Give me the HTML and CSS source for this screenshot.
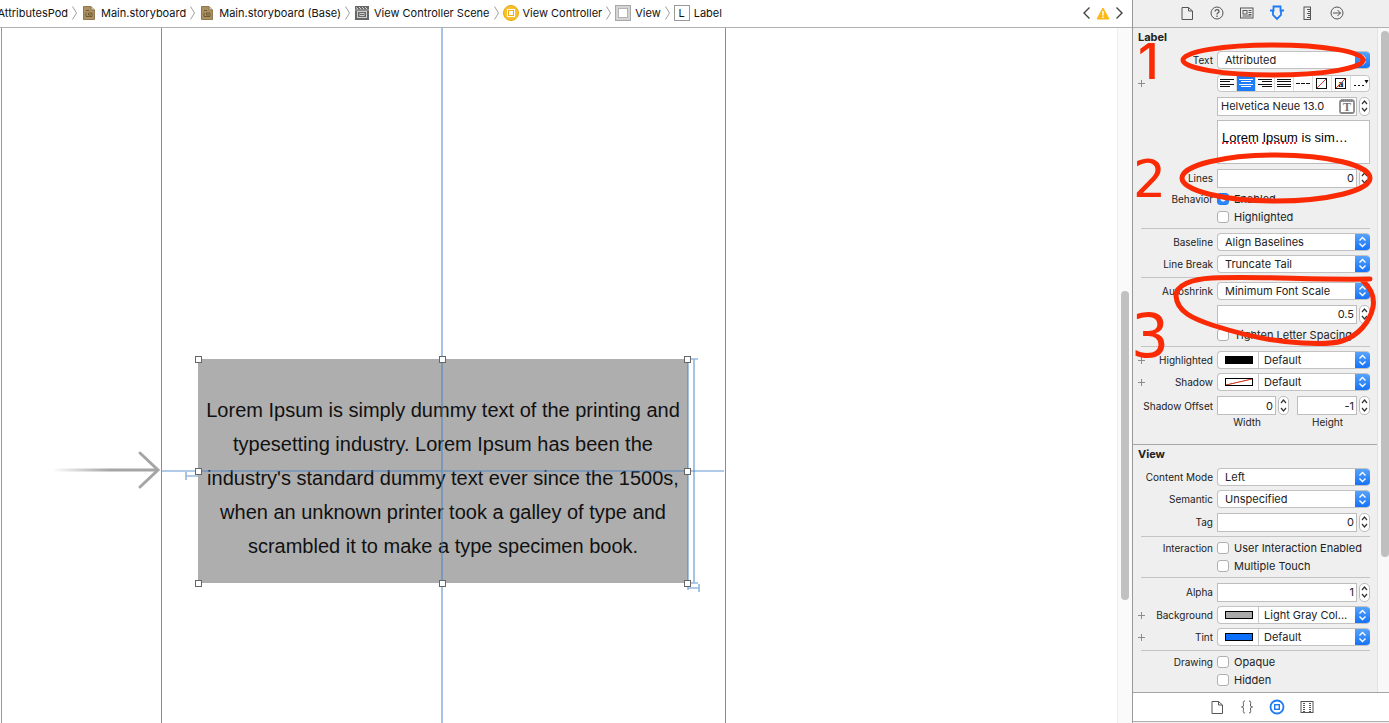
FILE: index.html
```html
<!DOCTYPE html>
<html lang="en">
<head>
  <meta charset="UTF-8">
  <title>Main.storyboard</title>
  <link rel="stylesheet" href="styles.css">
</head>
<body>
  <!-- shared icons -->
  <svg class="sprite" aria-hidden="true">
    <linearGradient id="arrow-fade" gradientUnits="userSpaceOnUse" x1="52" y1="0" x2="110" y2="0">
      <stop offset="0" stop-color="#a5a5a5" stop-opacity="0"/>
      <stop offset="1" stop-color="#a5a5a5"/>
    </linearGradient>
    <symbol id="sep" viewBox="0 0 5 16"><path d="M.5 1.500L4.500 8L.5 14.500" fill="none" stroke="#a0a0a0"/></symbol>
    <symbol id="storyboard" viewBox="0 0 12 14">
      <path d="M.5 .5H8L11.500 4V13.500H.5Z" fill="#ab9061" stroke="#8d7850"/>
      <path d="M8 .5V4H11.500" fill="#d9cdb5" stroke="#8d7850"/>
      <path d="M3 4.500H6M3 6.500V10.500H9V7H5.500V9H8" fill="none" stroke="#6f5a35"/>
    </symbol>
    <symbol id="updown" viewBox="0 0 15 18"><path d="M4.500 7.500L7.500 4.500L10.500 7.500M4.500 10.500L7.500 13.500L10.500 10.500" fill="none" stroke="#fff" stroke-width="1.400"/></symbol>
    <symbol id="up" viewBox="0 0 9 8"><path d="M2 6L4.500 3L7 6" fill="none" stroke="#333" stroke-width="1.200"/></symbol>
    <symbol id="down" viewBox="0 0 9 8"><path d="M2 2L4.500 5L7 2" fill="none" stroke="#333" stroke-width="1.200"/></symbol>
    <symbol id="plus" viewBox="0 0 7 7"><path d="M3.500 0V7M0 3.500H7" stroke="#8c8c8c"/></symbol>
    <symbol id="file" viewBox="0 0 16 16"><path d="M3 2.500H9.500L13.500 6V14.500H3ZM9.500 2.500V6H13.500" fill="none" stroke="#555"/></symbol>
  </svg>

  <div class="window">
    <main class="editor">
      <nav class="jumpbar" aria-label="Jump bar">
        <button class="crumb crumb-root">AttributesPod</button>
        <svg class="sep"><use href="#sep"/></svg>
        <button class="crumb"><svg width="16" height="14"><use href="#storyboard"/></svg>Main.storyboard</button>
        <svg class="sep"><use href="#sep"/></svg>
        <button class="crumb"><svg width="16" height="14"><use href="#storyboard"/></svg>Main.storyboard (Base)</button>
        <svg class="sep"><use href="#sep"/></svg>
        <button class="crumb">
          <svg width="16" height="14" viewBox="-1 0 16 14">
            <rect width="14" height="14" fill="#666"/>
            <path d="M1 1.500L3 3M4 1L6 3M7 1L9 3M10 1L12 3" stroke="#d8d8d8"/>
            <path d="M0 4H14" stroke="#ccc" stroke-width=".7"/>
            <rect x="2.500" y="5.500" width="9" height="6" fill="none" stroke="#d0d0d0"/>
            <rect x="5" y="7.500" width="4" height="2" fill="none" stroke="#d0d0d0"/>
          </svg>View Controller Scene
        </button>
        <svg class="sep"><use href="#sep"/></svg>
        <button class="crumb">
          <svg width="16" height="16" viewBox="0 0 16 16">
            <circle cx="8" cy="8" r="7.500" fill="#fbc02b" stroke="#e8a80e"/>
            <rect x="4.500" y="4.500" width="7" height="7" fill="#f0ae14" stroke="#fff"/>
            <rect x="6" y="6" width="4" height="4" fill="#fff"/>
          </svg>View Controller
        </button>
        <svg class="sep"><use href="#sep"/></svg>
        <button class="crumb">
          <svg width="16" height="16" viewBox="0 0 16 16">
            <rect x=".5" y=".5" width="15" height="15" fill="#d4d4d4" stroke="#a8a8a8"/>
            <rect x="3.500" y="3.500" width="9" height="9" fill="#fff" stroke="#b4b4b4"/>
          </svg>View
        </button>
        <svg class="sep"><use href="#sep"/></svg>
        <button class="crumb"><span class="label-icon">L</span>Label</button>

        <div class="issues">
          <button aria-label="Previous issue"><svg width="9" height="14" viewBox="0 0 9 14"><path d="M7.500 1.500L2 7L7.500 12.500" fill="none" stroke="#444" stroke-width="1.400"/></svg></button>
          <button aria-label="Warnings">
            <svg width="14" height="13" viewBox="0 0 14 13">
              <path d="M7 1L13 12H1Z" fill="#fcb913" stroke="#fcb913" stroke-linejoin="round"/>
              <path d="M7 4V8.500M7 9.500V11" stroke="#fff" stroke-width="1.500"/>
            </svg>
          </button>
          <button aria-label="Next issue"><svg width="9" height="14" viewBox="0 0 9 14"><path d="M1.500 1.500L7 7L1.500 12.500" fill="none" stroke="#444" stroke-width="1.400"/></svg></button>
        </div>
      </nav>

      <div class="canvas">
        <svg class="entry" width="162" height="60" viewBox="0 0 162 60">
          <path d="M52 30H156" stroke="url(#arrow-fade)" stroke-width="3"/>
          <path d="M140 13L158 30L140 47" fill="none" stroke="#a5a5a5" stroke-width="3" stroke-linecap="round"/>
        </svg>
        <div class="scene">
          <div class="ui-label">Lorem Ipsum is simply dummy text of the printing and<br>typesetting industry. Lorem Ipsum has been the<br>industry's standard dummy text ever since the 1500s,<br>when an unknown printer took a galley of type and<br>scrambled it to make a type specimen book.</div>
          <!-- constraint lines and resize handles -->
          <svg class="guides" width="563" height="700">
            <g fill="none" stroke="#3f7fc4" stroke-opacity=".55" stroke-width="2">
              <path d="M280 0V700M0 443H562" stroke-width="1.700"/>
              <path d="M526 330V562M532 331V555M526 331H536M526 555H536M526 560H537M537 556V564M24 448H36M24 444V452" stroke-width="1.700"/>
            </g>
            <g fill="#fff" stroke="#666">
              <rect x="33.500" y="328.500" width="6" height="6"/>
              <rect x="277.500" y="328.500" width="6" height="6"/>
              <rect x="522.500" y="328.500" width="6" height="6"/>
              <rect x="33.500" y="440.500" width="6" height="6"/>
              <rect x="522.500" y="440.500" width="6" height="6"/>
              <rect x="33.500" y="552.500" width="6" height="6"/>
              <rect x="277.500" y="552.500" width="6" height="6"/>
              <rect x="522.500" y="552.500" width="6" height="6"/>
            </g>
          </svg>
        </div>
        <div class="canvas-track"><div class="canvas-thumb"></div></div>
      </div>
    </main>

    <aside class="inspector">
      <div class="tabs">
        <button aria-label="File inspector"><svg width="16" height="16"><use href="#file"/></svg></button>
        <button aria-label="Quick help">
          <svg width="16" height="16" viewBox="0 0 16 16" fill="none" stroke="#555"><circle cx="8" cy="8" r="6"/><path d="M6 6.500C6 4 10 4 10 6.500C10 8 8 7.700 8 9.500M8 10.500V12" stroke-width="1.200"/></svg>
        </button>
        <button aria-label="Identity inspector">
          <svg width="16" height="16" viewBox="0 0 16 16" fill="none" stroke="#555"><rect x="1.500" y="3" width="12.500" height="10"/><rect x="4" y="5.500" width="4" height="3.500"/><path d="M9.500 5.500H12.500M9.500 7.500H12.500M9.500 9.500H12.500M3.500 11H12.500"/></svg>
        </button>
        <button aria-label="Attributes inspector">
          <svg width="16" height="16" viewBox="0 0 16 16" fill="none" stroke="#1d7bf5" stroke-width="1.800"><path d="M1 5.500H4.500V1.500H11.500V5.500H15M4 5.500V10L8 14L12 10V5.500"/></svg>
        </button>
        <button aria-label="Size inspector">
          <svg width="16" height="16" viewBox="0 0 16 16" fill="none" stroke="#555"><rect x="5" y="2" width="6.500" height="12.500"/><path d="M8 4.500H11M9 6.500H11M8 8.500H11M9 10.500H11M8 12.500H11"/></svg>
        </button>
        <button aria-label="Connections inspector">
          <svg width="16" height="16" viewBox="0 0 16 16" fill="none" stroke="#555"><circle cx="8" cy="8" r="6"/><path d="M4 8H11.500M8.500 5L11.500 8L8.500 11"/></svg>
        </button>
      </div>

      <div class="scroller">
        <div class="panes">
          <section class="pane pane-label">
            <h2>Label</h2>
            <div class="row">
              <div class="caption"><label for="text-type">Text</label></div>
              <div class="popup"><select id="text-type"><option>Attributed</option></select><svg class="cap"><use href="#updown"/></svg></div>
            </div>
            <div class="row row-field">
              <div class="caption"><button class="add" aria-label="Add text variation"><svg width="7" height="7"><use href="#plus"/></svg></button></div>
              <div class="segments">
                <button aria-label="Align left"><svg viewBox="0 0 18 15"><path d="M2 3.500H16M2 5.500H12M2 8.500H16M2 10.500H12"/></svg></button>
                <button class="active" aria-label="Align center"><svg viewBox="0 0 18 15"><path d="M2 3.500H16M4 5.500H14M2 8.500H16M4 10.500H14"/></svg></button>
                <button aria-label="Align right"><svg viewBox="0 0 18 15"><path d="M2 3.500H16M6 5.500H16M2 8.500H16M6 10.500H16"/></svg></button>
                <button aria-label="Justify"><svg viewBox="0 0 18 15"><path d="M2 3.500H16M2 5.500H16M2 8.500H16M2 10.500H16"/></svg></button>
                <button aria-label="Natural"><svg viewBox="0 0 18 15"><path d="M2 7.500H6M7 7.500H11M12 7.500H16"/></svg></button>
                <button aria-label="Text color"><svg viewBox="0 0 18 15"><rect x="3.500" y="2.500" width="10" height="10"/><path d="M4 12L13 3" class="slash"/></svg></button>
                <button aria-label="Background color"><svg viewBox="0 0 18 15"><rect x="3.500" y="2.500" width="10" height="10"/><text x="6" y="11">a</text><path d="M4 12L13 3" class="slash"/></svg></button>
                <button aria-label="More"><svg viewBox="0 0 18 15"><path d="M3 9.500H5M7 9.500H9M11 9.500H13"/><path d="M13.500 4H17.500L15.500 7.500Z" class="tip"/></svg></button>
              </div>
            </div>
            <div class="row">
              <div class="caption"></div>
              <div class="stepped">
                <div class="font-field">
                  <input type="text" value="Helvetica Neue 13.0" aria-label="Font">
                  <button aria-label="Choose font"><svg width="16" height="15" viewBox="0 0 16 15"><rect x="1" y="1.500" width="14" height="12.500" rx="1.500" fill="none" stroke="#888" stroke-width="1.800"/><path d="M2 1.500H14" stroke="#888" stroke-width="3" stroke-dasharray="1.500 .5"/><text x="4" y="12">T</text></svg></button>
                </div>
                <span class="stepper"><button aria-label="Increase font size"><svg><use href="#up"/></svg></button><button aria-label="Decrease font size"><svg><use href="#down"/></svg></button></span>
              </div>
            </div>
            <div class="row row-preview">
              <div class="caption"></div>
              <div class="preview" contenteditable="true" role="textbox" aria-label="Attributed text" spellcheck="false"><u>Lorem</u> <u>Ipsum</u> is sim…</div>
            </div>
            <div class="row row-field">
              <div class="caption"><label for="lines">Lines</label></div>
              <div class="stepped"><input type="text" id="lines" value="0"><span class="stepper"><button aria-label="More lines"><svg><use href="#up"/></svg></button><button aria-label="Fewer lines"><svg><use href="#down"/></svg></button></span></div>
            </div>
            <div class="row row-check">
              <div class="caption">Behavior</div>
              <label class="check"><input type="checkbox" checked>Enabled</label>
            </div>
            <div class="row row-check">
              <div class="caption"></div>
              <label class="check"><input type="checkbox">Highlighted</label>
            </div>
            <hr>
            <div class="row">
              <div class="caption"><label for="baseline">Baseline</label></div>
              <div class="popup"><select id="baseline"><option>Align Baselines</option></select><svg class="cap"><use href="#updown"/></svg></div>
            </div>
            <div class="row">
              <div class="caption"><label for="line-break">Line Break</label></div>
              <div class="popup"><select id="line-break"><option>Truncate Tail</option></select><svg class="cap"><use href="#updown"/></svg></div>
            </div>
            <hr>
            <div class="row">
              <div class="caption"><label for="autoshrink">Autoshrink</label></div>
              <div class="popup"><select id="autoshrink"><option>Minimum Font Scale</option></select><svg class="cap"><use href="#updown"/></svg></div>
            </div>
            <div class="row row-field">
              <div class="caption"></div>
              <div class="stepped"><input type="text" value="0.5" aria-label="Minimum font scale"><span class="stepper"><button aria-label="Increase scale"><svg><use href="#up"/></svg></button><button aria-label="Decrease scale"><svg><use href="#down"/></svg></button></span></div>
            </div>
            <div class="row row-check">
              <div class="caption"></div>
              <label class="check"><input type="checkbox">Tighten Letter Spacing</label>
            </div>
            <hr>
            <div class="row">
              <div class="caption"><button class="add" aria-label="Add highlighted variation"><svg width="7" height="7"><use href="#plus"/></svg></button><label for="highlighted">Highlighted</label></div>
              <div class="popup"><button class="well" aria-label="Highlighted color"><span class="swatch swatch-black"></span></button><select id="highlighted"><option>Default</option></select><svg class="cap"><use href="#updown"/></svg></div>
            </div>
            <div class="row">
              <div class="caption"><button class="add" aria-label="Add shadow variation"><svg width="7" height="7"><use href="#plus"/></svg></button><label for="shadow">Shadow</label></div>
              <div class="popup"><button class="well" aria-label="Shadow color"><span class="swatch swatch-none"></span></button><select id="shadow"><option>Default</option></select><svg class="cap"><use href="#updown"/></svg></div>
            </div>
            <div class="row row-offset">
              <div class="caption">Shadow Offset</div>
              <div class="offsets">
                <div class="stepped"><input type="text" id="offset-w" value="0"><span class="stepper"><button aria-label="Increase width"><svg><use href="#up"/></svg></button><button aria-label="Decrease width"><svg><use href="#down"/></svg></button></span></div>
                <div class="stepped"><input type="text" id="offset-h" value="-1"><span class="stepper"><button aria-label="Increase height"><svg><use href="#up"/></svg></button><button aria-label="Decrease height"><svg><use href="#down"/></svg></button></span></div>
                <label for="offset-w">Width</label>
                <label for="offset-h">Height</label>
              </div>
            </div>
          </section>

          <section class="pane">
            <h2>View</h2>
            <div class="row">
              <div class="caption"><label for="content-mode">Content Mode</label></div>
              <div class="popup"><select id="content-mode"><option>Left</option></select><svg class="cap"><use href="#updown"/></svg></div>
            </div>
            <div class="row">
              <div class="caption"><label for="semantic">Semantic</label></div>
              <div class="popup"><select id="semantic"><option>Unspecified</option></select><svg class="cap"><use href="#updown"/></svg></div>
            </div>
            <div class="row row-field">
              <div class="caption"><label for="tag">Tag</label></div>
              <div class="stepped"><input type="text" id="tag" value="0"><span class="stepper"><button aria-label="Increase tag"><svg><use href="#up"/></svg></button><button aria-label="Decrease tag"><svg><use href="#down"/></svg></button></span></div>
            </div>
            <hr>
            <div class="row row-check">
              <div class="caption">Interaction</div>
              <label class="check"><input type="checkbox">User Interaction Enabled</label>
            </div>
            <div class="row row-check">
              <div class="caption"></div>
              <label class="check"><input type="checkbox">Multiple Touch</label>
            </div>
            <hr>
            <div class="row row-field">
              <div class="caption"><label for="alpha">Alpha</label></div>
              <div class="stepped"><input type="text" id="alpha" value="1"><span class="stepper"><button aria-label="Increase alpha"><svg><use href="#up"/></svg></button><button aria-label="Decrease alpha"><svg><use href="#down"/></svg></button></span></div>
            </div>
            <div class="row">
              <div class="caption"><button class="add" aria-label="Add background variation"><svg width="7" height="7"><use href="#plus"/></svg></button><label for="background">Background</label></div>
              <div class="popup"><button class="well" aria-label="Background color"><span class="swatch swatch-gray"></span></button><select id="background"><option>Light Gray Col...</option></select><svg class="cap"><use href="#updown"/></svg></div>
            </div>
            <div class="row">
              <div class="caption"><button class="add" aria-label="Add tint variation"><svg width="7" height="7"><use href="#plus"/></svg></button><label for="tint">Tint</label></div>
              <div class="popup"><button class="well" aria-label="Tint color"><span class="swatch swatch-blue"></span></button><select id="tint"><option>Default</option></select><svg class="cap"><use href="#updown"/></svg></div>
            </div>
            <hr>
            <div class="row row-check">
              <div class="caption">Drawing</div>
              <label class="check"><input type="checkbox">Opaque</label>
            </div>
            <div class="row row-check">
              <div class="caption"></div>
              <label class="check"><input type="checkbox">Hidden</label>
            </div>
          </section>
        </div>
        <div class="track"><div class="thumb"></div></div>
      </div>

      <div class="tabs library">
        <button aria-label="File templates"><svg width="16" height="16"><use href="#file"/></svg></button>
        <button aria-label="Code snippets">
          <svg width="16" height="16" viewBox="0 0 16 16" fill="none" stroke="#555"><path d="M6 2C3.500 2 4.500 4 4.500 6C4.500 7.500 4 8 2.500 8C4 8 4.500 8.500 4.500 10C4.500 12 3.500 14 6 14M10 2C12.500 2 11.500 4 11.500 6C11.500 7.500 12 8 13.500 8C12 8 11.500 8.500 11.500 10C11.500 12 12.500 14 10 14"/></svg>
        </button>
        <button aria-label="Object library">
          <svg width="16" height="16" viewBox="0 0 16 16" fill="none" stroke="#1d7bf5"><circle cx="8" cy="8" r="6.500" stroke-width="1.800"/><rect x="5.700" y="5.700" width="4.600" height="4.600" stroke-width="1.400"/></svg>
        </button>
        <button aria-label="Media library">
          <svg width="16" height="16" viewBox="0 0 16 16" fill="none" stroke="#555"><rect x="2" y="2.500" width="12" height="11"/><path d="M5 4V13M11 4V13" stroke-width="2" stroke-dasharray="1 1"/></svg>
        </button>
      </div>

      <!-- red pen notes -->
      <svg class="notes" width="257" height="380" viewBox="1132 0 257 380">
        <g fill="none" stroke="#fa2a05" stroke-width="5" stroke-linecap="round">
          <ellipse cx="1273" cy="60" rx="90" ry="15"/>
          <ellipse cx="1276" cy="178" rx="94" ry="23"/>
          <path d="M1370 279C1310 280 1260 276 1212 278C1192 279 1176 285 1176 296C1177 312 1194 319 1212 325C1240 334 1275 342 1302 343C1320 344 1332 344 1342 341C1358 336 1370 322 1373 307C1375 296 1371 288 1362 280"/>
        </g>
        <text x="1138" y="79" class="note-one">1</text>
        <text x="1133" y="197">2</text>
        <text x="1131" y="357" class="note-three">3</text>
      </svg>
    </aside>
  </div>
</body>
</html>
```
FILE: styles.css
```css
* {
  box-sizing: border-box;
}
body {
  margin: 0;
  font-family: Inter, "Liberation Sans", sans-serif;
  font-size: 11px;
  line-height: 14px;
  color: #222;
}
button, input, select {
  font: inherit;
  color: inherit;
  margin: 0;
  padding: 0;
  border: none;
  background: none;
  outline: none;
}
svg {
  display: block;
  flex: none;
}
.sprite {
  position: absolute;
  width: 0;
  height: 0;
}
.window {
  display: flex;
  height: 100vh;
  overflow: hidden;
}

/* editor */
.editor {
  flex: 1;
  min-width: 0;
  display: flex;
  flex-direction: column;
  background: #fff;
}
.jumpbar {
  display: flex;
  align-items: center;
  gap: 4px;
  height: 28px;
  flex: none;
  padding: 0 8px 1px 0;
  border-bottom: 1px solid #b0b0b0;
}
.crumb {
  display: flex;
  align-items: center;
  gap: 4px;
  white-space: nowrap;
  color: #111;
}
.crumb-root {
  width: 68px;
  justify-content: flex-end;
  overflow: hidden;
}
.sep {
  width: 5px;
  height: 16px;
}
.label-icon {
  width: 16px;
  height: 16px;
  border: 1px solid #999;
  background: #fff;
  text-align: center;
}
.issues {
  display: flex;
  align-items: center;
  gap: 5px;
  margin-left: auto;
}
.canvas {
  position: relative;
  flex: 1;
  overflow: hidden;
  margin-left: 1px;
  border-left: 1px solid #999;
}
.entry {
  position: absolute;
  left: -2px;
  top: 412px;
}
.scene {
  position: absolute;
  left: 159px;
  top: 0;
  bottom: 0;
  width: 565px;
  border: solid #8c8c8c;
  border-width: 0 1px;
}
.ui-label {
  position: absolute;
  left: 36px;
  top: 331px;
  width: 490px;
  padding: 34px 0 20px;
  background: #aeaeae;
  color: #111;
  font-family: "Liberation Sans", Arial, sans-serif;
  font-size: 20px;
  line-height: 34px;
  text-align: center;
  white-space: nowrap;
}
.guides {
  position: absolute;
  left: 0;
  top: 0;
}
.canvas-track {
  position: absolute;
  right: 0;
  top: 0;
  bottom: 0;
  width: 15px;
  border-left: 1px solid #eee;
  background: #fafafa;
}
.canvas-thumb {
  width: 8px;
  height: 309px;
  margin: 263px 0 0 3px;
  border-radius: 4px;
  background: #c1c1c1;
}

/* inspector */
.inspector {
  position: relative;
  width: 257px;
  flex: none;
  display: flex;
  flex-direction: column;
  border-left: 1px solid #999;
  background: #efefef;
}
.tabs {
  display: flex;
  justify-content: center;
  align-items: center;
  height: 28px;
  flex: none;
  padding: 0 0 1px 2px;
  border-bottom: 1px solid #b0b0b0;
}
.tabs button {
  width: 30px;
  display: flex;
  justify-content: center;
}
.library {
  height: 30px;
  margin-bottom: 1px;
  border-top: 1px solid #a5a5a5;
  background: #fff;
}
.scroller {
  display: flex;
  flex: 1;
  min-height: 0;
}
.panes {
  flex: 1;
  overflow: hidden;
}
.track {
  width: 12px;
  padding-top: 3px;
  border-left: 1px solid #e2e2e2;
  background: #f8f8f8;
}
.thumb {
  width: 8px;
  height: 526px;
  margin-left: auto;
  border-radius: 4px;
  background: #bfbfbf;
}
.pane {
  padding: 0 7px 0 5px;
}
.pane-label {
  padding-bottom: 15px;
  border-bottom: 1px solid #a8a8a8;
}
.pane h2 {
  margin: 0;
  height: 21px;
  font-size: 11px;
  line-height: 19px;
  font-weight: 700;
}
.row {
  display: grid;
  grid-template-columns: minmax(0, 1fr) 153px;
  column-gap: 4px;
  align-items: center;
  height: 22px;
}
.row-field {
  height: 24px;
}
.row-preview {
  height: 49px;
}
.row-check {
  height: 18px;
}
.row-offset {
  height: 36px;
  align-items: start;
  padding-top: 3px;
}
.row-offset .caption {
  line-height: 20px;
}
hr {
  margin: 2px 0 2px 3px;
  border: none;
  border-top: 1px solid #c4c4c4;
}
.caption {
  display: flex;
  align-items: center;
  justify-content: flex-end;
  font-size: 10px;
  white-space: nowrap;
}
.add {
  margin-right: auto;
}
.popup {
  display: flex;
  height: 18px;
  border: 1px solid #c2c2c2;
  border-right: none;
  border-radius: 4px;
  background: #fff;
  overflow: hidden;
}
.popup select {
  flex: 1;
  min-width: 0;
  appearance: none;
  padding-left: 7px;
}
.well + select {
  padding-left: 5px;
}
.cap {
  width: 15px;
  height: 18px;
  margin: -1px 0;
  background: linear-gradient(#5ba6fb, #1270f7);
}
.well {
  width: 41px;
  padding: 0 5px 0 7px;
  border-right: 1px solid #c8c8c8;
}
.swatch {
  display: block;
  height: 8px;
  border: 1px solid #000;
}
.swatch-black { background: #000; }
.swatch-none { background: linear-gradient(to bottom right, #fff 42%, #d6452b 48%, #d6452b 52%, #fff 58%); }
.swatch-gray { background: #aaa; }
.swatch-blue { background: #0b6ffb; }

.segments {
  display: flex;
  height: 17px;
  border: 1px solid #c6c6c6;
  border-radius: 4px;
  background: #fff;
  overflow: hidden;
}
.segments button {
  flex: 1;
  min-width: 0;
  border-right: 1px solid #ddd;
}
.segments button:last-child {
  border-right: none;
}
.segments svg {
  width: 18px;
  height: 15px;
  fill: none;
  stroke: #111;
}
.segments text {
  font: bold 11px "Liberation Serif", serif;
  fill: #111;
  stroke: none;
}
.segments .active {
  background: #1d7cf8;
}
.segments .active svg {
  stroke: #fff;
}
.segments .slash {
  stroke: #e0392b;
}
.segments .tip {
  fill: #111;
  stroke: none;
}
.stepped {
  display: flex;
  gap: 2px;
  min-width: 0;
}
.stepped > input, .font-field {
  flex: 1;
  min-width: 0;
  height: 19px;
  border: 1px solid #bdbdbd;
  background: #fff;
}
.stepped > input {
  padding-right: 2px;
  text-align: right;
}
.font-field {
  display: flex;
  align-items: center;
  padding: 0 1px 0 3px;
}
.font-field input {
  flex: 1;
  min-width: 0;
}
.font-field text {
  font: bold 12px "Liberation Serif", serif;
  fill: #777;
}
.stepper {
  display: flex;
  flex-direction: column;
  width: 11px;
  height: 19px;
  border: 1px solid #bdbdbd;
  border-radius: 5px;
  background: #fff;
}
.stepper button {
  flex: 1;
}
.stepper svg {
  width: 9px;
  height: 8px;
}
.preview {
  height: 44px;
  padding: 8px 4px;
  border: 1px solid #bdbdbd;
  background: #fff;
  color: #000;
  font-family: "Liberation Sans", Arial, sans-serif;
  font-size: 13px;
  line-height: 18px;
  white-space: nowrap;
  outline: none;
}
.preview u {
  text-decoration: underline dotted #e33 2px;
  text-decoration-skip-ink: none;
}
.check {
  display: flex;
  align-items: center;
  gap: 5px;
  white-space: nowrap;
}
.check input {
  appearance: none;
  width: 12px;
  height: 12px;
  border: 1px solid #b0b0b0;
  border-radius: 3px;
  background: #fff;
}
.check input:checked {
  border-color: #1d7cf8;
  background: radial-gradient(#fff 2px, #2f86f8 3px);
}
.offsets {
  display: grid;
  grid-template-columns: 72px 73px;
  column-gap: 8px;
}
.offsets label {
  padding-right: 12px;
  font-size: 10px;
  text-align: center;
}

.notes {
  position: absolute;
  left: -1px;
  top: 0;
  pointer-events: none;
}
.notes text {
  font-family: "DejaVu Sans", sans-serif;
  font-size: 52px;
  fill: #fa2a05;
}
.notes .note-one {
  font-family: Inter, sans-serif;
  font-size: 50px;
  font-weight: 500;
}
.notes .note-three {
  font-size: 60px;
}
```
